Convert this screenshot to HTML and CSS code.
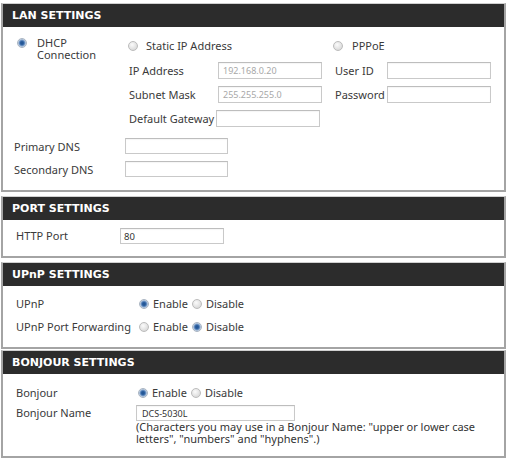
FILE: index.html
```html
<!DOCTYPE html>
<html>
<head>
<meta charset="utf-8">
<link rel="stylesheet" href="styles.css">
</head>
<body>
<div class="page">
  <section class="panel">
    <h2 class="panel-head">LAN SETTINGS</h2>
    <div class="panel-body lan-body">
      <div class="lan-grid">
        <label class="opt opt-dhcp"><span class="radio on"></span><span class="opt-text">DHCP<br>Connection</span></label>
        <label class="opt opt-static"><span class="radio"></span><span class="opt-text">Static IP Address</span></label>
        <label class="opt opt-pppoe"><span class="radio"></span><span class="opt-text">PPPoE</span></label>
        <span class="lbl a-ipl">IP Address</span>
        <span class="field field-dis a-ipi">192.168.0.20</span>
        <span class="lbl a-uidl">User ID</span>
        <span class="field a-uidi"></span>
        <span class="lbl a-snl">Subnet Mask</span>
        <span class="field field-dis a-sni">255.255.255.0</span>
        <span class="lbl a-pwl">Password</span>
        <span class="field a-pwi"></span>
        <span class="lbl a-gwl">Default Gateway</span>
        <span class="field a-gwi"></span>
      </div>
      <div class="dns-grid">
        <span class="lbl">Primary DNS</span>
        <span class="field field-dns"></span>
        <span class="lbl">Secondary DNS</span>
        <span class="field field-dns"></span>
      </div>
    </div>
  </section>

  <section class="panel">
    <h2 class="panel-head">PORT SETTINGS</h2>
    <div class="panel-body port-body">
      <div class="row row-port">
        <span class="lbl">HTTP Port</span>
        <span class="field field-val">80</span>
      </div>
    </div>
  </section>

  <section class="panel">
    <h2 class="panel-head">UPnP SETTINGS</h2>
    <div class="panel-body upnp-body">
      <div class="row row-upnp">
        <span class="lbl">UPnP</span>
        <span class="choices"><span class="radio on"></span><span class="ch">Enable</span><span class="radio"></span><span class="ch">Disable</span></span>
      </div>
      <div class="row row-upnp">
        <span class="lbl">UPnP Port Forwarding</span>
        <span class="choices"><span class="radio"></span><span class="ch">Enable</span><span class="radio on"></span><span class="ch">Disable</span></span>
      </div>
    </div>
  </section>

  <section class="panel panel-tight">
    <h2 class="panel-head">BONJOUR SETTINGS</h2>
    <div class="panel-body bonjour-body">
      <div class="row row-bonjour">
        <span class="lbl">Bonjour</span>
        <span class="choices choices-b"><span class="radio on"></span><span class="ch">Enable</span><span class="radio"></span><span class="ch">Disable</span></span>
      </div>
      <div class="row-bname">
        <span class="lbl">Bonjour Name</span>
        <div class="bname-col">
          <span class="field field-bname">DCS-5030L</span>
          <p class="note">(Characters you may use in a Bonjour Name: "upper or lower case<br>letters", "numbers" and "hyphens".)</p>
        </div>
      </div>
    </div>
  </section>
</div>
</body>
</html>
```

FILE: styles.css
```css
* { box-sizing: border-box; }

html, body {
  margin: 0;
  padding: 0;
  background: #ffffff;
}

body {
  font-family: "Noto Sans", "Open Sans", sans-serif;
  font-size: 11px;
  color: #3a3a3a;
  width: 506px;
  height: 460px;
  overflow: hidden;
}

.page {
  padding-top: 3px;
  padding-left: 1px;
}

.panel {
  border: 2px solid #a4a4a4;
  border-top: 1px solid #d0d0d0;
  margin-top: 4px;
  background: #fff;
}

.panel:first-child { margin-top: 0; }
.panel-tight { margin-top: 1px; }

.panel-head {
  margin: 0;
  height: 23px;
  line-height: 23px;
  padding-left: 9px;
  background: #2c2c2c;
  color: #ffffff;
  font-family: "DejaVu Sans", sans-serif;
  font-weight: bold;
  font-size: 11px;
}

.panel-body {
  padding-left: 11px;
}

/* LAN */
.lan-body {
  padding-top: 9px;
  padding-bottom: 13px;
}

.lan-grid {
  display: grid;
  grid-template-columns: 114px 90px 115px 54px 104px;
  grid-template-rows: 19px 17px 17px 17px;
  row-gap: 7px;
  grid-template-areas:
    "dhcp stat stat ppp  ppp"
    "dhcp ipl  ipi  uidl uidi"
    ".    snl  sni  pwl  pwi"
    ".    gwl  gwi  .    .";
}

.opt {
  display: flex;
  align-items: center;
  gap: 9px;
  line-height: 12px;
}

.opt-dhcp {
  grid-area: dhcp;
  align-items: flex-start;
  padding-top: 1px;
  padding-left: 3px;
  gap: 10px;
}

.opt-dhcp .radio { margin-top: 1px; }

.opt-static { grid-area: stat; gap: 8px; }
.opt-pppoe { grid-area: ppp; }

.a-ipl { grid-area: ipl; padding-left: 1px; }
.a-ipi { grid-area: ipi; }
.a-uidl { grid-area: uidl; padding-left: 2px; }
.a-uidi { grid-area: uidi; }
.a-snl { grid-area: snl; padding-left: 1px; }
.a-sni { grid-area: sni; }
.a-pwl { grid-area: pwl; padding-left: 2px; }
.a-pwi { grid-area: pwi; }
.a-gwl { grid-area: gwl; padding-left: 1px; }
.a-gwi { grid-area: gwi; margin-left: -2px; width: 106px; }

.lbl {
  line-height: 17px;
  white-space: nowrap;
  color: #3a3a3a;
}

.field {
  display: block;
  width: 104px;
  height: 17px;
  border: 1px solid #c9c9c9;
  border-top-color: #bdbdbd;
  background: #fff;
  font-size: 9px;
  line-height: 15px;
  padding-left: 4px;
  color: #333;
  box-shadow: inset 0 1px 1px rgba(0,0,0,0.04);
}

.field-dis {
  color: #a8a8a8;
}

.dns-grid {
  display: grid;
  grid-template-columns: 111px 103px;
  grid-auto-rows: 16px;
  row-gap: 7px;
  margin-top: 11px;
  align-items: center;
}

.field-dns {
  width: 103px;
  height: 16px;
}

/* rows */
.row {
  display: grid;
  align-items: center;
  height: 16px;
}

.port-body {
  padding-top: 7px;
  padding-bottom: 13px;
}

.row-port {
  grid-template-columns: 104px 104px;
  padding-left: 2px;
}

.field-val {
  height: 16px;
  font-size: 9.5px;
  padding-left: 3px;
}

.upnp-body {
  padding-top: 9px;
  padding-bottom: 13px;
  display: flex;
  flex-direction: column;
  gap: 7px;
}

.row-upnp {
  grid-template-columns: 123px auto;
  padding-left: 2px;
}

.choices {
  display: flex;
  align-items: center;
}

.ch {
  margin-left: 4px;
  margin-right: 4px;
  line-height: 16px;
}

.bonjour-body {
  padding-top: 10px;
  padding-bottom: 12px;
}

.row-bonjour {
  grid-template-columns: 120px auto;
  padding-left: 2px;
}

.choices-b { padding-left: 2px; }

.row-bname {
  display: grid;
  grid-template-columns: 120px auto;
  padding-left: 2px;
  margin-top: 5px;
}

.row-bname .lbl { line-height: 16px; }

.field-bname {
  width: 159px;
  height: 16px;
  font-size: 9px;
  padding-left: 5px;
}

.note {
  margin: 0;
  font-size: 11px;
  line-height: 11.5px;
  color: #333;
  white-space: nowrap;
}

/* radio */
.radio {
  display: inline-block;
  flex: none;
  width: 10px;
  height: 10px;
  border-radius: 50%;
  border: 1px solid #bcbcbc;
  background: radial-gradient(circle at 40% 35%, #fbfbfb 0, #e3e3e3 55%, #cfcfcf 100%);
}

.radio.on {
  border-color: #a9b4c2;
  background: radial-gradient(circle at 50% 50%, #1d4f8c 0, #2f62a3 1.8px, #7ea1cc 3px, #dfe5ec 4.2px);
}
```
